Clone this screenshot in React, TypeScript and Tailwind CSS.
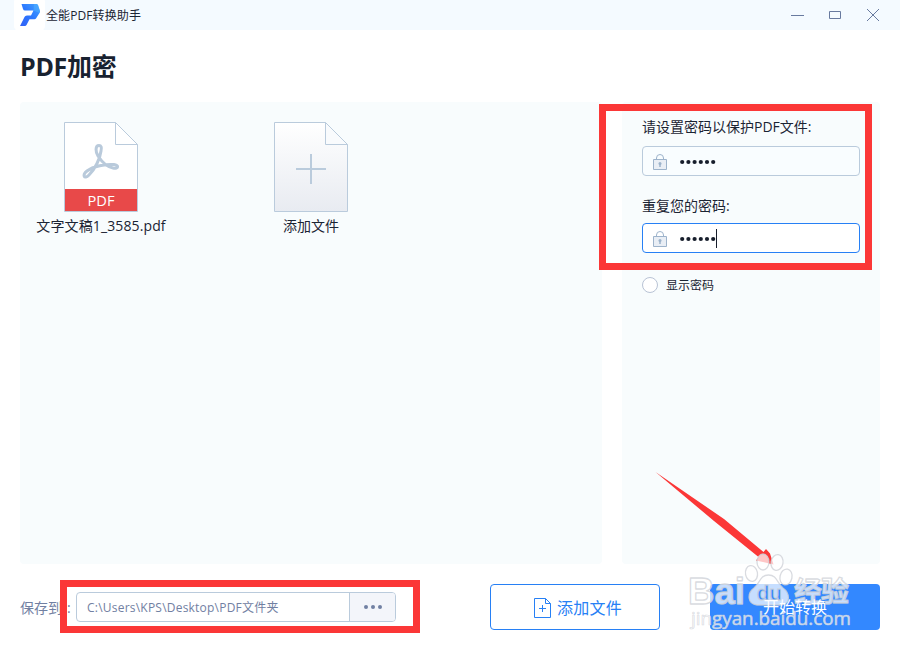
import React from 'react';

function Logo() {
  return (
    <svg width="31" height="31" viewBox="0 0 31 31" className="shrink-0">
      <defs>
        <linearGradient id="logo" x1="0" y1="1" x2="1" y2="0">
          <stop offset="0" stopColor="#3262f6" />
          <stop offset=".5" stopColor="#2c78ff" />
          <stop offset="1" stopColor="#45a5ff" />
        </linearGradient>
      </defs>
      <rect y="-3" width="31" height="34" rx="5" fill="#fff" />
      <path d="M7.500 4H22.500Q23.500 4 24 5L26 11Q26.200 12 25.500 13L22 18.500Q21.500 19.300 20.500 19.300H15.500L12.500 25Q12 26 11 26H6L10.500 17Q11 15.500 13 15.500H17L19.500 10.500H11Q9.500 10.500 9 9Z" fill="url(#logo)" />
      <path d="M20 4H22.500L24 5L26 11L25.500 13L19.500 10.500Z" fill="#52b1ff" opacity=".5" />
    </svg>
  );
}

function FileIcon({ pdf = false }: { pdf?: boolean }) {
  return (
    <svg width="74" height="90" viewBox="0 0 74 90" className="shrink-0">
      <defs>
        <linearGradient id="paper" x1="0" y1="0" x2="0" y2="1">
          <stop stopColor="#fff" />
          <stop offset="1" stopColor="#e8ebf1" />
        </linearGradient>
      </defs>
      <path d="M.5 .5H51.500L73.500 22.500V89.500H.5Z" fill={pdf ? '#fff' : 'url(#paper)'} stroke="#bacbdc" />
      <path d="M51.500 .5V22.500H73.500Z" fill={pdf ? '#fff' : '#f9fbfd'} stroke="#bacbdc" />
      {pdf ? (
        <>
          <path d="M1 67H73V89H1Z" fill="#e84949" />
          <path d="M35 23.500C31 23.500 31.500 30 34 34C38 40 43 45 49 46C55 47 55 43 50 42.500C42 42 29 44 23 49C18 53 20 58 25 53C31 47 36 37 37 29C38 25 37 23.500 35 23.500Z" fill="none" stroke="#b9cadb" strokeWidth="3" />
          <text x="37" y="83.500" textAnchor="middle" fill="#fff" fontFamily="Open Sans, sans-serif" fontSize="15" textLength="27" lengthAdjust="spacingAndGlyphs">PDF</text>
        </>
      ) : (
        <path d="M37 32V62M22 47H52" stroke="#bacbdc" strokeWidth="2" fill="none" />
      )}
    </svg>
  );
}

function LockIcon() {
  return (
    <svg width="14" height="16" viewBox="0 0 14 16" fill="none" stroke="#9db3cb" className="mt-px shrink-0">
      <path d="M3.500 5V4Q3.500 .5 7 .5Q10.500 .5 10.500 4V5" />
      <path d="M.5 5.500H13.500V15.500H.5Z" fill="#e9eef5" />
      <path d="M7 9V13" strokeWidth="1.500" />
      <circle cx="7" cy="9.500" r="1.500" fill="#9db3cb" stroke="none" />
    </svg>
  );
}

function PasswordField({ active = false }: { active?: boolean }) {
  return (
    <div className={`flex h-[30px] w-[218px] items-center rounded border pl-2.5 ${active ? 'border-[#2780f5] bg-white' : 'border-[#bacbdc] bg-[#f9fdff]'}`}>
      <LockIcon />
      <svg width="38" height="6" viewBox="0 0 38 6" fill="#171e2c" className="ml-[12px] mt-[2px] shrink-0">
        {[0, 1, 2, 3, 4, 5].map((i) => <circle key={i} cx={3.2 + i * 6.2} cy="3" r="2.100" />)}
      </svg>
      {active && <span className="-ml-px h-[19px] w-px bg-[#171e2c]" />}
    </div>
  );
}

function Annotations() {
  return (
    <svg width="900" height="650" viewBox="0 0 900 650" className="pointer-events-none absolute left-0 top-0">
      <g fill="none" stroke="#fb3737">
        <rect x="602.500" y="107.500" width="266" height="159" strokeWidth="7" />
        <rect x="63.500" y="583.500" width="353" height="46" strokeWidth="7" />
      </g>
      <path d="M655.500 472L724 519L763.500 552L766 549L770 553.500L773.500 564.500L756 560.500L758.500 557L714 521Z" fill="#fb3737" />
      <g fill="#fff" fillOpacity=".72" stroke="#cfd2d8" strokeOpacity=".8" strokeWidth="1.300" strokeLinejoin="round">
        <ellipse cx="763" cy="562" rx="6" ry="8" />
        <ellipse cx="777" cy="562.500" rx="6" ry="8" transform="rotate(10 777 562.500)" />
        <ellipse cx="751.500" cy="573.500" rx="6" ry="8" transform="rotate(-10 751.500 573.500)" />
        <ellipse cx="786" cy="577" rx="6" ry="8" transform="rotate(12 786 577)" />
        <path d="M768.500 575C777 575 777 583 783 588C790 593 791 604 781 605H757C747 604 747 593 754 588C760 583 760 575 768.500 575Z" />
        <text x="757" y="600" fontFamily="Liberation Sans, sans-serif" fontSize="21" fontWeight="700" fill="#3388ff" fillOpacity="1" textLength="25" lengthAdjust="spacingAndGlyphs">du</text>
        <text x="688" y="604" fontFamily="Liberation Sans, sans-serif" fontSize="37" fontWeight="700" textLength="57" lengthAdjust="spacingAndGlyphs">Bai</text>
        <text x="794" y="601.500" fontFamily="Noto Sans CJK SC, sans-serif" fontSize="28" fontWeight="700" textLength="55">经验</text>
        <text x="691" y="625" fontFamily="Open Sans, sans-serif" fontSize="18.500" strokeWidth=".7" textLength="160" lengthAdjust="spacingAndGlyphs">jingyan.baidu.com</text>
      </g>
    </svg>
  );
}

export default function App() {
  return (
    <div className="relative flex h-[650px] w-[900px] flex-col overflow-hidden bg-white font-['Open_Sans','Noto_Sans_CJK_SC',sans-serif] text-[#1b2433]">
      <header className="flex h-[30px] shrink-0 items-center bg-[#f4faff] pl-[14px] pr-[20px]">
        <Logo />
        <span className="ml-[1px] mt-[2px] whitespace-nowrap text-[12px] leading-[18px] tracking-[0.1px]">全能PDF转换助手</span>
        <svg width="90" height="14" viewBox="0 0 90 14" fill="none" stroke="#687a9f" className="ml-auto">
          <path d="M1 7.500H14M39.500 3.500H50.500V10.500H39.500ZM77 1L89 13M89 1L77 13" />
        </svg>
      </header>
      <h1 className="mt-[17px] h-[55px] shrink-0 pl-[20px] text-[25px] font-bold leading-[38px] tracking-[-0.3px] text-[#182230]">PDF加密</h1>
      <main className="flex h-[462px] shrink-0 gap-5 px-5">
        <section className="flex w-[582px] rounded bg-[#f8fcfd] pt-5">
          <div className="flex w-[162px] flex-col items-center">
            <FileIcon pdf />
            <span className="mt-1 whitespace-nowrap text-[14px] leading-5 tracking-[0.12px]">文字文稿1_3585.pdf</span>
          </div>
          <div className="ml-[48px] flex w-[162px] flex-col items-center">
            <FileIcon />
            <span className="mt-1 text-[14px] leading-5">添加文件</span>
          </div>
        </section>
        <aside className="flex w-[258px] flex-col rounded bg-[#f8fcfd] pl-5 pt-[15px]">
          <label className="mb-[9px] whitespace-nowrap text-[14px] leading-5">请设置密码以保护PDF文件:</label>
          <PasswordField />
          <label className="mb-[7px] mt-[20px] text-[14px] leading-5">重复您的密码:</label>
          <PasswordField active />
          <div className="mt-[23px] flex h-[18px] items-center gap-2 text-[12px]">
            <span className="size-4 rounded-full border border-[#b8c3d5] bg-white" /><span className="mt-[2px]">显示密码</span>
          </div>
        </aside>
      </main>
      <footer className="mt-[20px] flex h-[46px] shrink-0 items-center px-5">
        <span className="flex w-[56px] whitespace-nowrap text-[14px] text-[#7180a2]">保存到<span className="ml-[5px]">:</span></span>
        <div className="flex h-[30px] w-[320px] overflow-hidden rounded border border-[#bacbdc]">
          <div className="flex w-[273px] items-center whitespace-nowrap border-r border-[#bacbdc] pl-[10px] pt-[2px] text-[12px] tracking-[0.22px] text-[#7180a2]">C:\Users\KPS\Desktop\PDF文件夹</div>
          <button className="flex flex-1 items-center justify-center gap-[3px] bg-[#f3f5fa]">
            {[0, 1, 2].map((i) => <span key={i} className="size-1 rounded-full bg-[#7180a2]" />)}
          </button>
        </div>
        <button className="ml-[94px] flex h-[46px] w-[170px] items-center justify-center gap-1.5 rounded border border-[#2780f5] pl-[6px] text-[16px] text-[#2780f5]">
          <svg width="17" height="20" viewBox="0 0 17 20" fill="none" stroke="#2780f5" className="mt-px"><path d="M.5 .5H11.500L16.500 5.500V19.500H.5ZM11.500 .5V5.500H16.500M8.500 7V14M5 10.500H12" /></svg>
          <span className="mt-[2px] tracking-[0.2px]">添加文件</span>
        </button>
        <button className="ml-[50px] h-[46px] w-[170px] rounded bg-[#3388ff] text-[16px] text-white"><span className="relative z-10">开始转换</span></button>
      </footer>
      <Annotations />
    </div>
  );
}
